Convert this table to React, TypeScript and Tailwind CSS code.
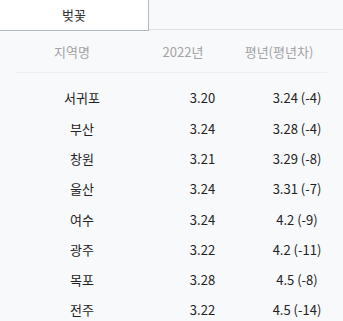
const rows = [
	{ city: '서귀포', y2022: '3.20', avg: '3.24 (-4)' },
	{ city: '부산', y2022: '3.24', avg: '3.28 (-4)' },
	{ city: '창원', y2022: '3.21', avg: '3.29 (-8)' },
	{ city: '울산', y2022: '3.24', avg: '3.31 (-7)' },
	{ city: '여수', y2022: '3.24', avg: '4.2 (-9)' },
	{ city: '광주', y2022: '3.22', avg: '4.2 (-11)' },
	{ city: '목포', y2022: '3.28', avg: '4.5 (-8)' },
	{ city: '전주', y2022: '3.22', avg: '4.5 (-14)' },
];

const App = () => {
	return (
		<div
			className="w-[343px] h-[321px] overflow-hidden bg-[#f8f9fb] text-[13px]"
			style={{ fontFamily: '"Noto Sans CJK KR", "Noto Sans", sans-serif' }}>
			<div className="flex">
				<div className="w-[149px] h-[31px] bg-white border-r border-b border-[#b4b9c1] flex items-center justify-center text-[#333]">
					벚꽃
				</div>
				<div className="flex-1 h-[30px] border-b border-[#dde0e5]" />
			</div>
			<div className="mx-4 h-[42px] border-b border-[#eceef1] flex items-center text-[#a3a3a3]">
				<div className="w-[112px] text-center">지역명</div>
				<div className="w-[110px] text-center">2022년</div>
				<div className="w-[82px] text-center">평년(평년차)</div>
			</div>
			<div className="pt-[10px] pl-4 text-[#222]">
				{rows.map((r) => (
					<div key={r.city} className="h-[30.3px] flex items-center">
						<div className="w-[132px] text-center">{r.city}</div>
						<div className="w-[109px] text-center">{r.y2022}</div>
						<div className="w-[80px] text-center">{r.avg}</div>
					</div>
				))}
			</div>
		</div>
	);
};

export default App;
